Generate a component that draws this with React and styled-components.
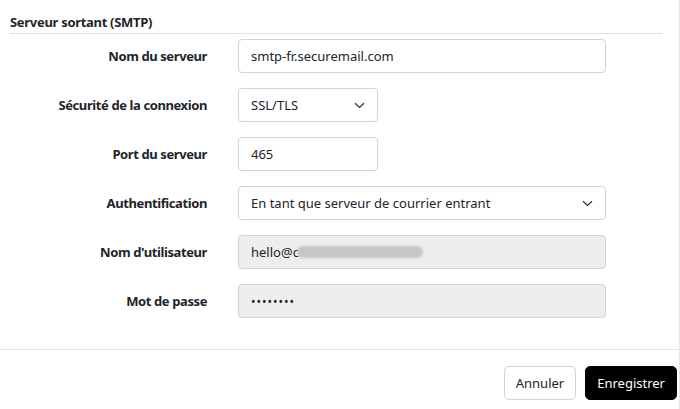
import styled, { createGlobalStyle } from "styled-components";

const Global = createGlobalStyle`
  html, body {
    margin: 0;
    padding: 0;
    background: #fff;
  }
  body {
    font-family: "Segoe UI", "Noto Sans", "Open Sans", sans-serif;
    font-size: 13px;
    color: #212529;
  }
`;

const Page = styled.div`
  width: 680px;
  height: 409px;
  display: flex;
  flex-direction: column;
  box-sizing: border-box;
  border-right: 1px solid #e6e6e6;
`;

const Body = styled.div`
  padding: 13px 17px 0 10px;
  flex: 1;
`;

const SectionTitle = styled.h3`
  margin: 0;
  font-size: 13px;
  font-weight: 700;
  line-height: 18px;
  letter-spacing: -0.3px;
  padding-bottom: 2px;
  border-bottom: 1px solid #dee2e6;
`;

const Form = styled.div`
  display: flex;
  flex-direction: column;
  gap: 15px;
  padding-top: 5px;
`;

const Row = styled.div`
  display: grid;
  grid-template-columns: 197px 368px;
  column-gap: 31px;
  align-items: center;
`;

const Label = styled.label`
  text-align: right;
  font-weight: 700;
  letter-spacing: -0.4px;
`;

const Field = styled.div`
  box-sizing: border-box;
  width: ${({ $w }) => $w || "368px"};
  height: 34px;
  padding: 0 12px;
  display: flex;
  align-items: center;
  justify-content: ${({ $start }) => ($start ? "flex-start" : "space-between")};
  border: 1px solid #ced4da;
  border-radius: 4px;
  background: ${({ $disabled }) => ($disabled ? "#eeeeee" : "#fff")};
  white-space: nowrap;
`;

const Blurred = styled.span`
  display: inline-block;
  width: 126px;
  height: 12px;
  margin-left: -2px;
  border-radius: 6px;
  background: #c6c6c6;
  filter: blur(1px);
`;

const Dots = styled.span`
  letter-spacing: 1px;
  font-size: 12px;
`;

const Footer = styled.div`
  border-top: 1px solid #e3e3e3;
  margin-top: 1px;
  padding: 16px 2px 9px 0;
  display: flex;
  justify-content: flex-end;
  gap: 9px;
`;

const Button = styled.button`
  font-family: inherit;
  font-size: 13px;
  height: 34px;
  padding: 0 11px;
  border-radius: 5px;
  border: 1px solid ${({ $primary }) => ($primary ? "#000" : "#d0d4d8")};
  background: ${({ $primary }) => ($primary ? "#000" : "#fff")};
  color: ${({ $primary }) => ($primary ? "#fff" : "#212529")};
`;

const Chevron = () => (
  <svg width="11" height="7" viewBox="0 0 11 7" fill="none">
    <path d="M1 1.2 L5.5 5.5 L10 1.2" stroke="#333" strokeWidth="1.2" />
  </svg>
);

export default function App() {
  return (
    <Page>
      <Global />
      <Body>
        <SectionTitle>Serveur sortant (SMTP)</SectionTitle>
        <Form>
          <Row>
            <Label>Nom du serveur</Label>
            <Field>smtp-fr.securemail.com</Field>
          </Row>
          <Row>
            <Label>Sécurité de la connexion</Label>
            <Field $w="140px">
              SSL/TLS
              <Chevron />
            </Field>
          </Row>
          <Row>
            <Label>Port du serveur</Label>
            <Field $w="140px">465</Field>
          </Row>
          <Row>
            <Label>Authentification</Label>
            <Field>
              En tant que serveur de courrier entrant
              <Chevron />
            </Field>
          </Row>
          <Row>
            <Label>Nom d'utilisateur</Label>
            <Field $disabled $start>
              hello@c<Blurred />
            </Field>
          </Row>
          <Row>
            <Label>Mot de passe</Label>
            <Field $disabled>
              <Dots>••••••••</Dots>
            </Field>
          </Row>
        </Form>
      </Body>
      <Footer>
        <Button>Annuler</Button>
        <Button $primary>Enregistrer</Button>
      </Footer>
    </Page>
  );
}
